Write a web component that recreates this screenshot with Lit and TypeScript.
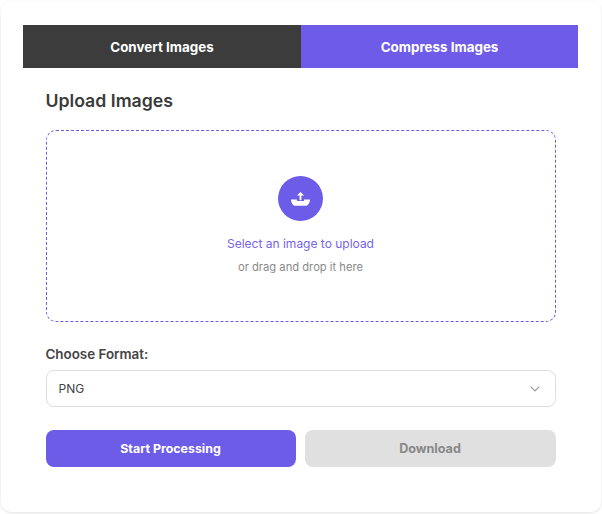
import { LitElement, html, css } from "lit";
import { customElement } from "lit/decorators.js";

@customElement("app-root")
export class AppRoot extends LitElement {
  static styles = css`
    :host { display: block; width: 602px; height: 514px; background: #fff; font-family: Inter, "Liberation Sans", sans-serif; box-sizing: border-box; padding: 1px; }
    * { box-sizing: border-box; }
    .card { width: 600px; height: 511px; background: #fff; border-radius: 10px; padding: 24px 22px 0 22px; box-shadow: 0 1px 3px rgba(0, 0, 0, 0.12); }
    .tabs { display: grid; grid-template-columns: 278px 277px; height: 43px; }
    .tab { display: flex; align-items: center; justify-content: center; color: #fff; font-size: 13.4px; font-weight: 700; }
    .tab.dark { background: #3c3c3c; }
    .tab.active { background: #6e5ce8; }
    .body { padding: 0 22.5px; }
    h2 { margin: 0; padding-top: 22px; height: 62px; font-size: 17.7px; line-height: 22px; font-weight: 600; color: #3a3a3a; }
    .drop { height: 192px; margin-right: 1px; border: 1px dashed #6e5ce8; border-radius: 10px; display: flex; flex-direction: column; align-items: center; padding-top: 45px; }
    .circle { width: 45px; height: 45px; border-radius: 50%; background: #6c5ce7; display: flex; align-items: center; justify-content: center; }
    .select-text { margin-top: 15px; font-size: 12px; line-height: 16px; color: #7663ee; }
    .or { margin-top: 7px; font-size: 11.2px; line-height: 16px; color: #8a8a8a; }
    .label { margin-top: 24px; font-size: 13.4px; line-height: 16px; font-weight: 600; color: #444; }
    .select { margin-top: 8px; margin-right: 1px; height: 37px; border: 1px solid #dedede; border-radius: 8px; display: flex; align-items: center; justify-content: space-between; padding: 0 15px 0 12px; font-size: 12px; color: #444; }
    .buttons { margin-top: 23px; display: grid; grid-template-columns: 250px 251px; gap: 9px; }
    .btn { height: 37px; border-radius: 8px; display: flex; align-items: center; justify-content: center; font-size: 12.4px; font-weight: 700; }
    .start { background: #6c5ce7; color: #fff; }
    .dl { background: #e0e0e0; color: #888; font-size: 12.6px; }
  `;

  render() {
    return html`
      <div class="card">
        <div class="tabs">
          <div class="tab dark">Convert Images</div>
          <div class="tab active">Compress Images</div>
        </div>
        <div class="body">
          <h2>Upload Images</h2>
          <div class="drop">
            <div class="circle">
              <svg width="19" height="14" viewBox="0 0 19 14" fill="#fff">
                <path d="M0 7.6h6v1.4h7V7.6h6c0 3-1.4 5.2-3.4 6.2H3.4C1.4 12.8 0 10.6 0 7.6z"/>
                <path d="M8.6 8.2V3.6H5.9L9.5 0l3.6 3.6h-2.7v4.6z"/>
              </svg>
            </div>
            <div class="select-text">Select an image to upload</div>
            <div class="or">or drag and drop it here</div>
          </div>
          <div class="label">Choose Format:</div>
          <div class="select">
            <span>PNG</span>
            <svg width="10" height="6" viewBox="0 0 10 6" fill="none" stroke="#999" stroke-width="1.1"><path d="M.7.7 5 5l4.3-4.3"/></svg>
          </div>
          <div class="buttons">
            <div class="btn start">Start Processing</div>
            <div class="btn dl">Download</div>
          </div>
        </div>
      </div>
    `;
  }
}
